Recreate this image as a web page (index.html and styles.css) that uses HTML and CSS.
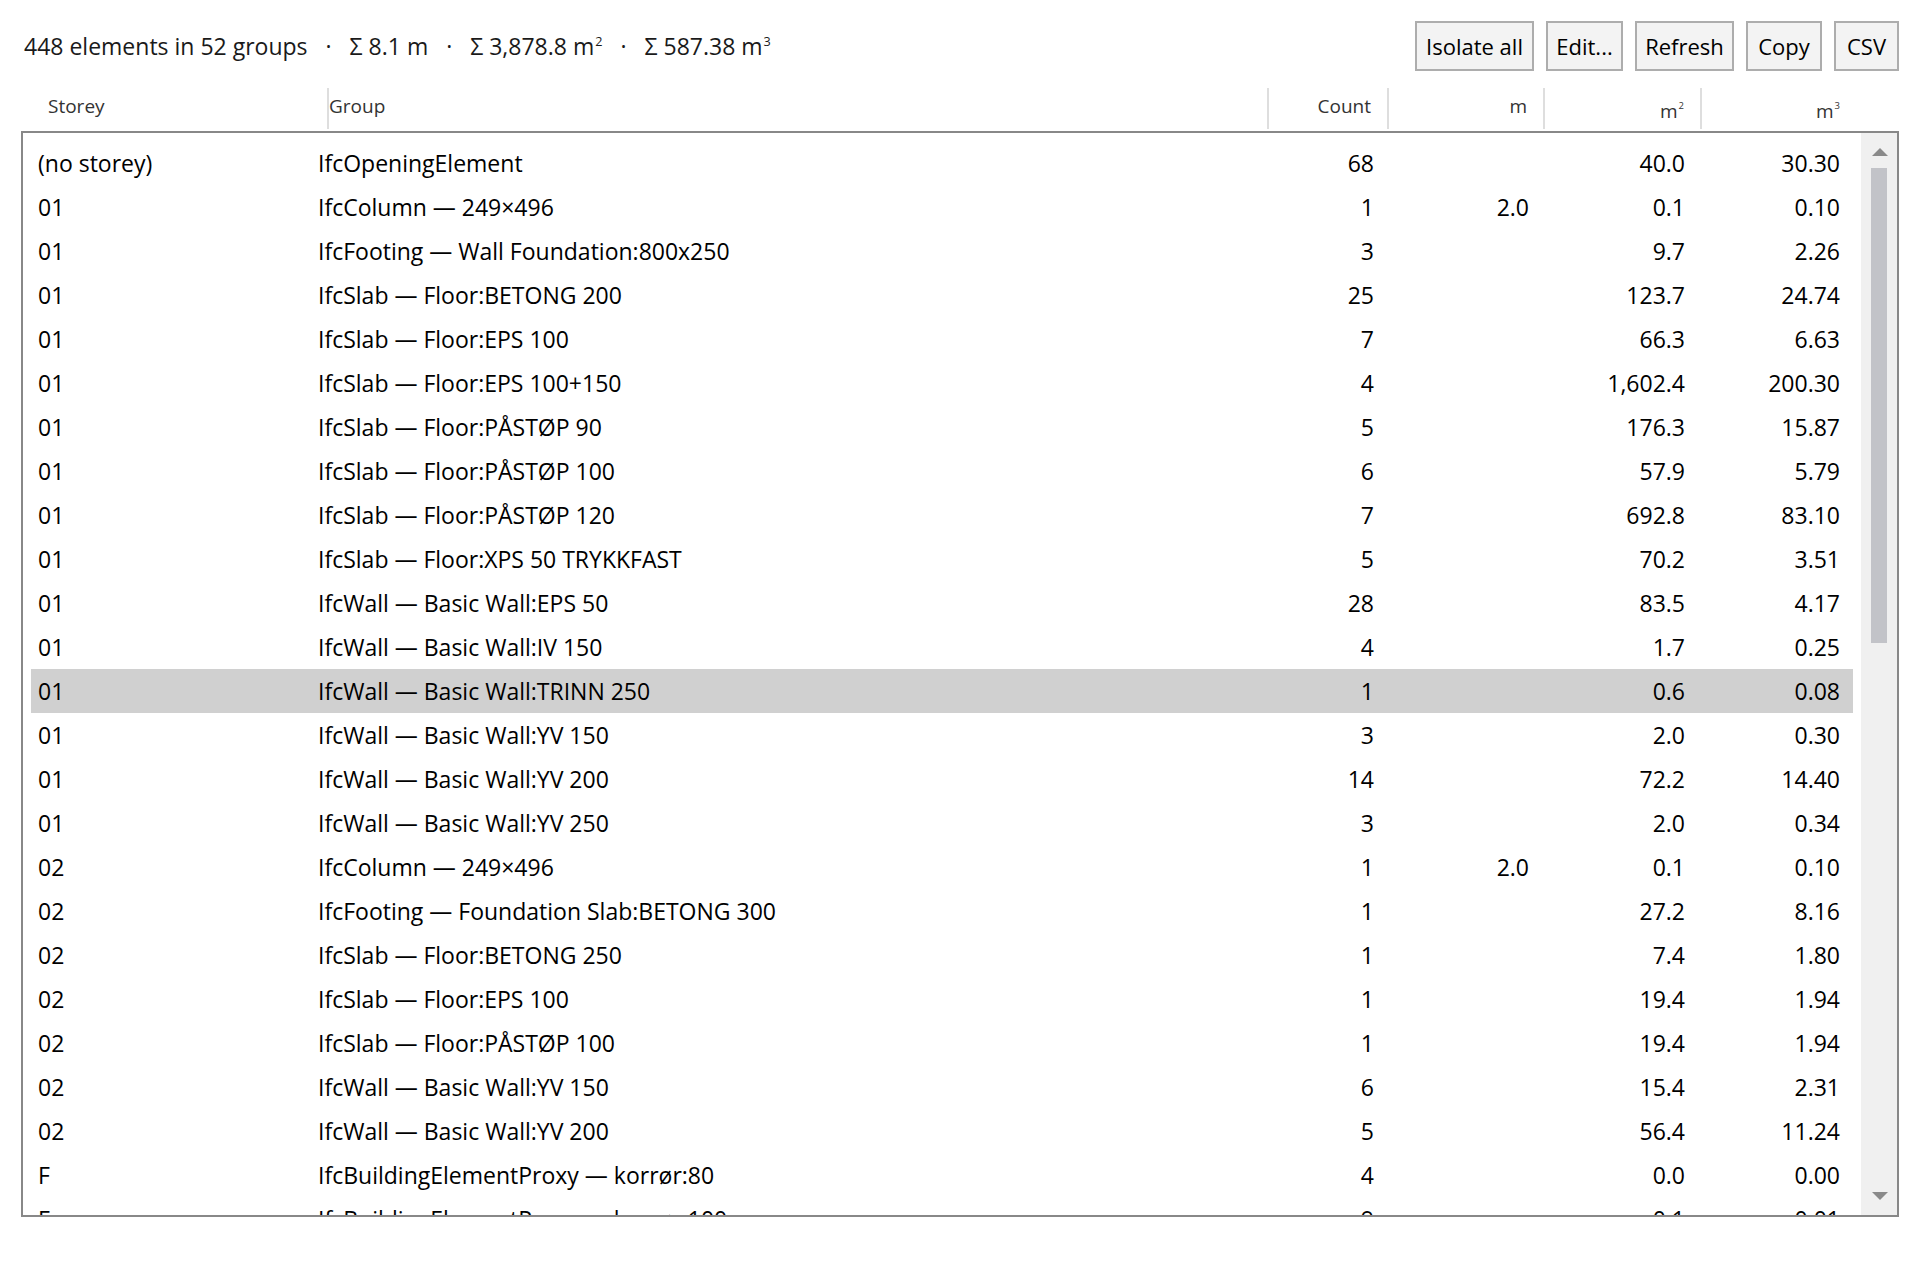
FILE: index.html
```html
<!DOCTYPE html>
<html lang="en">
<head>
    <meta charset="UTF-8">
    <title>Quantities</title>
    <link rel="stylesheet" href="styles.css">
</head>
<body>

<div class="page">
    <div class="toolbar">
        <div class="summary">
            <span>448 elements in 52 groups</span>
            <span class="sep">·</span>
            <span>Σ 8.1 m</span>
            <span class="sep">·</span>
            <span>Σ 3,878.8 m<span class="sup">2</span></span>
            <span class="sep">·</span>
            <span>Σ 587.38 m<span class="sup">3</span></span>
        </div>
        <div class="buttons">
            <button class="btn btn-isolate">Isolate all</button>
            <button class="btn btn-edit">Edit...</button>
            <button class="btn btn-refresh">Refresh</button>
            <button class="btn btn-copy">Copy</button>
            <button class="btn btn-csv">CSV</button>
        </div>
    </div>

    <div class="header">
        <div class="hcell storey">Storey</div>
        <div class="hcell group">Group</div>
        <div class="hcell num">Count</div>
        <div class="hcell num">m</div>
        <div class="hcell num">m<span class="sup">2</span></div>
        <div class="hcell num">m<span class="sup">3</span></div>
    </div>

    <div class="list">
        <div class="rows">
            <div class="row"><div>(no storey)</div><div class="name">IfcOpeningElement</div><div class="num">68</div><div class="num"></div><div class="num">40.0</div><div class="num">30.30</div></div>
            <div class="row"><div>01</div><div class="name">IfcColumn — 249×496</div><div class="num">1</div><div class="num">2.0</div><div class="num">0.1</div><div class="num">0.10</div></div>
            <div class="row"><div>01</div><div class="name">IfcFooting — Wall Foundation:800x250</div><div class="num">3</div><div class="num"></div><div class="num">9.7</div><div class="num">2.26</div></div>
            <div class="row"><div>01</div><div class="name">IfcSlab — Floor:BETONG 200</div><div class="num">25</div><div class="num"></div><div class="num">123.7</div><div class="num">24.74</div></div>
            <div class="row"><div>01</div><div class="name">IfcSlab — Floor:EPS 100</div><div class="num">7</div><div class="num"></div><div class="num">66.3</div><div class="num">6.63</div></div>
            <div class="row"><div>01</div><div class="name">IfcSlab — Floor:EPS 100+150</div><div class="num">4</div><div class="num"></div><div class="num">1,602.4</div><div class="num">200.30</div></div>
            <div class="row"><div>01</div><div class="name">IfcSlab — Floor:PÅSTØP 90</div><div class="num">5</div><div class="num"></div><div class="num">176.3</div><div class="num">15.87</div></div>
            <div class="row"><div>01</div><div class="name">IfcSlab — Floor:PÅSTØP 100</div><div class="num">6</div><div class="num"></div><div class="num">57.9</div><div class="num">5.79</div></div>
            <div class="row"><div>01</div><div class="name">IfcSlab — Floor:PÅSTØP 120</div><div class="num">7</div><div class="num"></div><div class="num">692.8</div><div class="num">83.10</div></div>
            <div class="row"><div>01</div><div class="name">IfcSlab — Floor:XPS 50 TRYKKFAST</div><div class="num">5</div><div class="num"></div><div class="num">70.2</div><div class="num">3.51</div></div>
            <div class="row"><div>01</div><div class="name">IfcWall — Basic Wall:EPS 50</div><div class="num">28</div><div class="num"></div><div class="num">83.5</div><div class="num">4.17</div></div>
            <div class="row"><div>01</div><div class="name">IfcWall — Basic Wall:IV 150</div><div class="num">4</div><div class="num"></div><div class="num">1.7</div><div class="num">0.25</div></div>
            <div class="row selected"><div>01</div><div class="name">IfcWall — Basic Wall:TRINN 250</div><div class="num">1</div><div class="num"></div><div class="num">0.6</div><div class="num">0.08</div></div>
            <div class="row"><div>01</div><div class="name">IfcWall — Basic Wall:YV 150</div><div class="num">3</div><div class="num"></div><div class="num">2.0</div><div class="num">0.30</div></div>
            <div class="row"><div>01</div><div class="name">IfcWall — Basic Wall:YV 200</div><div class="num">14</div><div class="num"></div><div class="num">72.2</div><div class="num">14.40</div></div>
            <div class="row"><div>01</div><div class="name">IfcWall — Basic Wall:YV 250</div><div class="num">3</div><div class="num"></div><div class="num">2.0</div><div class="num">0.34</div></div>
            <div class="row"><div>02</div><div class="name">IfcColumn — 249×496</div><div class="num">1</div><div class="num">2.0</div><div class="num">0.1</div><div class="num">0.10</div></div>
            <div class="row"><div>02</div><div class="name">IfcFooting — Foundation Slab:BETONG 300</div><div class="num">1</div><div class="num"></div><div class="num">27.2</div><div class="num">8.16</div></div>
            <div class="row"><div>02</div><div class="name">IfcSlab — Floor:BETONG 250</div><div class="num">1</div><div class="num"></div><div class="num">7.4</div><div class="num">1.80</div></div>
            <div class="row"><div>02</div><div class="name">IfcSlab — Floor:EPS 100</div><div class="num">1</div><div class="num"></div><div class="num">19.4</div><div class="num">1.94</div></div>
            <div class="row"><div>02</div><div class="name">IfcSlab — Floor:PÅSTØP 100</div><div class="num">1</div><div class="num"></div><div class="num">19.4</div><div class="num">1.94</div></div>
            <div class="row"><div>02</div><div class="name">IfcWall — Basic Wall:YV 150</div><div class="num">6</div><div class="num"></div><div class="num">15.4</div><div class="num">2.31</div></div>
            <div class="row"><div>02</div><div class="name">IfcWall — Basic Wall:YV 200</div><div class="num">5</div><div class="num"></div><div class="num">56.4</div><div class="num">11.24</div></div>
            <div class="row"><div>F</div><div class="name">IfcBuildingElementProxy — korrør:80</div><div class="num">4</div><div class="num"></div><div class="num">0.0</div><div class="num">0.00</div></div>
            <div class="row"><div>F</div><div class="name">IfcBuildingElementProxy — korrør:100</div><div class="num">9</div><div class="num"></div><div class="num">0.1</div><div class="num">0.01</div></div>
        </div>
        <div class="scrollbar">
            <svg class="arrow" width="16" height="8" viewBox="0 0 16 8"><polygon points="0,8 16,8 8,0" fill="#8a8a8a"/></svg>
            <div class="thumb"></div>
            <div class="track-rest"></div>
            <svg class="arrow" width="16" height="8" viewBox="0 0 16 8"><polygon points="0,0 16,0 8,8" fill="#8a8a8a"/></svg>
        </div>
    </div>
</div>

</body>
</html>
```

FILE: styles.css
```css
body {
    margin: 0;
    padding: 0;
    background-color: #ffffff;
    font-family: 'Segoe UI', 'Open Sans', sans-serif;
    color: #000;
}

.page {
    padding: 21px 21px 0 21px;
}

.toolbar {
    display: flex;
    justify-content: space-between;
    align-items: center;
    height: 50px;
}

.summary {
    padding-left: 3px;
    font-size: 23px;
    color: #1a1a1a;
    white-space: nowrap;
}

.sep {
    margin: 0 12px;
}

.sup {
    font-size: 0.55em;
    vertical-align: 0.75em;
    margin-left: 1px;
}

.buttons {
    display: flex;
    gap: 12px;
    height: 50px;
}

.btn {
    font-family: 'Segoe UI', 'Open Sans', sans-serif;
    font-size: 22px;
    color: #000;
    background-color: #f3f3f3;
    border: 2px solid #adadad;
    border-radius: 0;
    padding: 0;
    height: 50px;
}

.btn-isolate { width: 119px; }
.btn-edit { width: 77px; }
.btn-refresh { width: 99px; }
.btn-copy { width: 76px; }
.btn-csv { width: 65px; }

.header {
    display: grid;
    grid-template-columns: 296px 940px 120px 156px 157px 156px;
    margin-top: 17px;
    padding-left: 10px;
    height: 36px;
    font-size: 19px;
    color: #333;
}

.hcell {
    line-height: 36px;
    white-space: nowrap;
}

.hcell.storey {
    padding-left: 17px;
}

.hcell.group,
.hcell.num {
    border-left: 2px solid #dedede;
}

.hcell.num {
    text-align: right;
    padding-right: 16px;
}

.hcell .sup {
    font-size: 0.5em;
    vertical-align: 0.9em;
}

.list {
    display: flex;
    margin-top: 7px;
    height: 1082px;
    border: 2px solid #888888;
    overflow: hidden;
}

.rows {
    flex: 1;
    padding: 8px 8px 0 8px;
    overflow: hidden;
}

.row {
    display: grid;
    grid-template-columns: 280px 956px 120px 155px 156px 155px;
    height: 44px;
    line-height: 44px;
    font-size: 23px;
    white-space: nowrap;
}

.row > div:first-child {
    padding-left: 7px;
}

.row .name {
    padding-left: 7px;
}

.row .num {
    text-align: right;
    padding-right: 13px;
}

.row.selected {
    background-color: #d0d0d0;
}

.scrollbar {
    width: 36px;
    background-color: #f0f0f0;
    display: flex;
    flex-direction: column;
    align-items: center;
}

.arrow {
    display: block;
    margin: 15px 0 0 1px;
}

.scrollbar .arrow:last-child {
    margin: 0 0 15px 1px;
}

.thumb {
    width: 16px;
    height: 475px;
    margin-top: 12px;
    background-color: #c2c3c8;
}

.track-rest {
    flex: 1;
}
```
